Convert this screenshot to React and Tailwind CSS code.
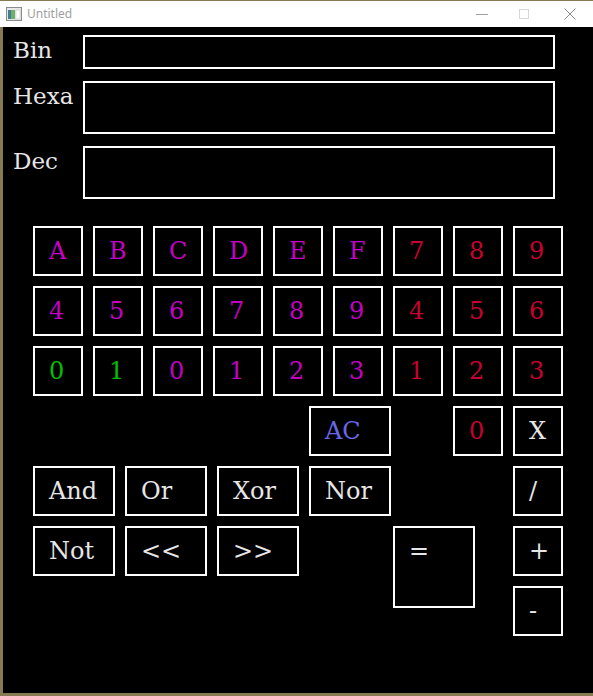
import React from "react";

const MAG = "text-[#c400c4]";
const RED = "text-[#c8002f]";
const GRN = "text-[#00c000]";
const WHT = "text-[#e6e6e6]";

const grid = [
    [["A", MAG], ["B", MAG], ["C", MAG], ["D", MAG], ["E", MAG], ["F", MAG], ["7", RED], ["8", RED], ["9", RED]],
    [["4", MAG], ["5", MAG], ["6", MAG], ["7", MAG], ["8", MAG], ["9", MAG], ["4", RED], ["5", RED], ["6", RED]],
    [["0", GRN], ["1", GRN], ["0", MAG], ["1", MAG], ["2", MAG], ["3", MAG], ["1", RED], ["2", RED], ["3", RED]],
];

function Key({ label, color = WHT, wide = false, className = "" }) {
    return (
        <div
            className={`${wide ? "w-[82px]" : "w-[50px]"} h-[50px] shrink-0 border-2 border-white flex items-center pl-[14px] text-[24px] leading-none ${color} ${className}`}
        >
            {label}
        </div>
    );
}

function Field({ label, h }) {
    return (
        <div className="flex items-start">
            <div className="w-[80px] pl-[10px] pt-[1px] text-[23px] leading-[28px] text-[#e6e6e6]">{label}</div>
            <div className={`w-[472px] ${h} border-2 border-white`} />
        </div>
    );
}

export default function App() {
    return (
        <div
            className="w-[593px] h-[696px] bg-[#857a52] flex flex-col overflow-hidden"
            style={{ fontFamily: '"DejaVu Serif", serif' }}
        >
            {/* title bar */}
            <div className="mt-[1px] h-[26px] bg-white flex items-center shrink-0">
                <svg width="16" height="14" viewBox="0 0 16 14" className="ml-[6px]">
                    <rect x="0.5" y="0.5" width="15" height="13" fill="#e8e8e8" stroke="#8a8a8a" />
                    <rect x="2" y="3" width="7" height="9" fill="#3f7f8f" />
                    <rect x="5" y="3" width="4" height="9" fill="#6fb06a" />
                    <rect x="10" y="3" width="4" height="9" fill="#ffffff" stroke="#bbbbbb" strokeWidth="0.5" />
                </svg>
                <span
                    className="ml-[5px] text-[12px] text-[#a0a0a0]"
                    style={{ fontFamily: '"Noto Sans", sans-serif' }}
                >
                    Untitled
                </span>
                <div className="flex-1" />
                <div className="w-[12px] h-[1px] bg-[#a0a0a0] mr-[31px]" />
                <div className="w-[10px] h-[10px] border border-[#d8d8d8] mr-[35px]" />
                <svg width="12" height="12" viewBox="0 0 12 12" className="mr-[17px]">
                    <path d="M0.5 0.5 L11.5 11.5 M11.5 0.5 L0.5 11.5" stroke="#8a8a8a" strokeWidth="1" />
                </svg>
            </div>

            {/* client area */}
            <div className="flex-1 ml-[3px] mb-[3px] bg-black pt-[8px]">
                <div className="flex flex-col gap-[12px]">
                    <Field label="Bin" h="h-[34px]" />
                    <Field label="Hexa" h="h-[53px]" />
                    <Field label="Dec" h="h-[53px]" />
                </div>

                <div className="mt-[27px] ml-[30px] flex flex-col gap-[10px]">
                    {grid.map((row, i) => (
                        <div key={i} className="flex gap-[10px]">
                            {row.map(([l, c], j) => (
                                <Key key={j} label={l} color={c} />
                            ))}
                        </div>
                    ))}

                    <div className="flex">
                        <Key label="AC" color="text-[#6868e6]" wide className="ml-[276px]" />
                        <Key label="0" color={RED} className="ml-[62px]" />
                        <Key label="X" className="ml-[10px]" />
                    </div>

                    <div className="flex gap-[10px]">
                        <Key label="And" wide />
                        <Key label="Or" wide />
                        <Key label="Xor" wide />
                        <Key label="Nor" wide />
                        <Key label="/" className="ml-[112px]" />
                    </div>

                    <div className="flex items-start">
                        <div className="flex gap-[10px]">
                            <Key label="Not" wide />
                            <Key label="<<" wide />
                            <Key label=">>" wide />
                        </div>
                        <div className="ml-[94px] w-[82px] h-[82px] border-2 border-white">
                            <div className="h-[46px] flex items-center pl-[14px] text-[24px] leading-none text-[#e6e6e6]">=</div>
                        </div>
                        <div className="ml-[38px] flex flex-col gap-[10px]">
                            <Key label="+" />
                            <Key label="-" />
                        </div>
                    </div>
                </div>
            </div>
        </div>
    );
}
